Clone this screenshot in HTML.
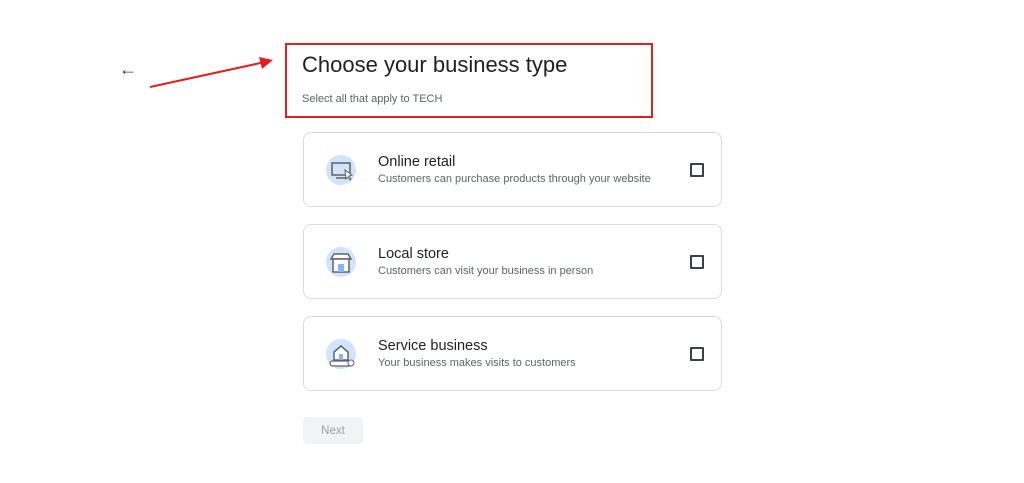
<!DOCTYPE html>
<html><head><style>
body{margin:0;width:1024px;height:483px;background:#fff;font-family:"Liberation Sans",sans-serif;position:relative;overflow:hidden}
.abs{position:absolute}
.card{position:absolute;left:303px;width:419px;height:75px;border:1px solid #dadce0;border-radius:8px;box-sizing:border-box}
.card .t{position:absolute;left:74px;top:21px;font-size:14.5px;color:#202124}
.card .s{position:absolute;left:74px;top:40px;font-size:11px;color:#5f6368}
.card .cb{position:absolute;left:386px;top:30px;width:10px;height:10px;border:2px solid #3c4043;border-radius:1px}
.card svg{position:absolute;left:20px;top:20px}
</style></head><body>
<div class="abs" style="left:119px;top:59px;font-size:18px;color:#3c4043">&#8592;</div>
<svg class="abs" style="left:145px;top:52px" width="135" height="40"><line x1="5" y1="35" x2="120" y2="10" stroke="#e02020" stroke-width="2"/><polygon points="128,8 114,5 117,17" fill="#e02020"/></svg>
<div class="abs" style="left:285px;top:43px;width:364px;height:71px;border:2px solid #e02020"></div>
<div class="abs" style="left:302px;top:52px;font-size:22px;color:#202124">Choose your business type</div>
<div class="abs" style="left:302px;top:93px;font-size:11px;color:#5f6368">Select all that apply to TECH</div>

<div class="card" style="top:132px"><svg width="36" height="36"><circle cx="17" cy="17" r="15" fill="#d2e3fc"/><rect x="8" y="10" width="18" height="12" fill="none" stroke="#5f6368" stroke-width="1.5"/><line x1="12" y1="25" x2="22" y2="25" stroke="#5f6368" stroke-width="1.5"/><path d="M21 17l7 5-3 1 2 3-1 1-2-3-2 2z" fill="#fff" stroke="#5f6368"/></svg><div class="t">Online retail</div><div class="s">Customers can purchase products through your website</div><div class="cb"></div></div>

<div class="card" style="top:224px"><svg width="36" height="36"><circle cx="17" cy="17" r="15" fill="#d2e3fc"/><path d="M7 14l3-5h14l3 5z" fill="#fff" stroke="#5f6368" stroke-width="1.5"/><rect x="9" y="14" width="16" height="13" fill="#fff" stroke="#5f6368" stroke-width="1.5"/><rect x="14" y="19" width="6" height="8" fill="#8ab4f8"/></svg><div class="t">Local store</div><div class="s">Customers can visit your business in person</div><div class="cb"></div></div>

<div class="card" style="top:316px"><svg width="36" height="36"><circle cx="17" cy="17" r="15" fill="#d2e3fc"/><path d="M10 15l7-6 7 6v8h-14z" fill="#fff" stroke="#5f6368" stroke-width="1.5"/><rect x="15" y="17" width="4" height="6" fill="#8ab4f8"/><rect x="6" y="24" width="22" height="5" rx="2.5" fill="#fff" stroke="#5f6368" stroke-width="1.2"/><circle cx="27" cy="26" r="3" fill="#fff" stroke="#5f6368"/></svg><div class="t">Service business</div><div class="s">Your business makes visits to customers</div><div class="cb"></div></div>

<div class="abs" style="left:303px;top:417px;width:60px;height:27px;background:#f1f3f4;border-radius:4px;color:#9aa0a6;font-size:11.5px;text-align:center;line-height:28px">Next</div>
</body></html>
